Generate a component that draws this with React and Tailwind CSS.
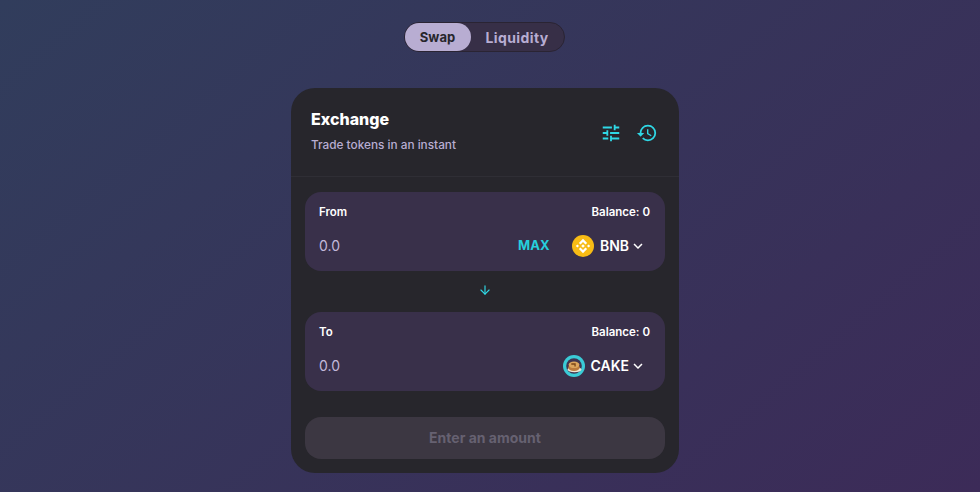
import { MdTune, MdHistory, MdKeyboardArrowDown } from "react-icons/md";
import { LuArrowDown } from "react-icons/lu";

function BnbLogo() {
  return (
    <svg viewBox="0 0 22 22" className="w-[22px] h-[22px]">
      <circle cx="11" cy="11" r="11" fill="#F8BC15" />
      <g fill="#fff">
        <path d="M11 3.8 6.9 7.9l1.6 1.6L11 7l2.5 2.5 1.6-1.6z" />
        <path d="M11 18.2l4.1-4.1-1.6-1.6L11 15l-2.5-2.5-1.6 1.6z" />
        <path d="M3.8 11l1.6-1.6L7 11l-1.6 1.6z" />
        <path d="M15 11l1.6-1.6 1.6 1.6-1.6 1.6z" />
        <path d="M11 9.2 12.8 11 11 12.8 9.2 11z" />
      </g>
    </svg>
  );
}

function CakeLogo() {
  return (
    <svg viewBox="0 0 22 22" className="w-[22px] h-[22px]">
      <circle cx="11" cy="11" r="11" fill="#3ACBD6" />
      <circle cx="11" cy="11" r="7.8" fill="#3F3550" />
      <ellipse cx="11.5" cy="14.6" rx="7" ry="2.6" fill="#EDE6D6" />
      <ellipse cx="11" cy="12.6" rx="5.8" ry="3.4" fill="#B97A3C" />
      <ellipse cx="11" cy="9.8" rx="5.4" ry="3.3" fill="#DBA55C" />
      <path d="M8.3 8.2h4.4v3.2h-1.3V9.8H8.3z" fill="#7A4416" />
    </svg>
  );
}

function TokenPanel({ label, logo, symbol, showMax }) {
  return (
    <div className="h-[79px] rounded-2xl bg-[#39304a] pl-3.5 pr-[15px] pt-3 shrink-0">
      <div className="flex items-center justify-between text-[11.5px] leading-4 font-semibold text-white">
        <span>{label}</span>
        <span>Balance: 0</span>
      </div>
      <div className="flex items-center mt-[13px] h-[26px]">
        <span className="flex-1 text-sm text-[#c2b8da]">0.0</span>
        {showMax && (
          <span className="text-[13px] font-bold text-[#26cfdc] tracking-[0.2px] mr-[22px]">MAX</span>
        )}
        {logo}
        <span className="ml-1.5 text-sm font-semibold text-white">{symbol}</span>
        <MdKeyboardArrowDown className="w-[18px] h-[18px] mr-[3px] text-white" />
      </div>
    </div>
  );
}

export default function App() {
  return (
    <div
      className="w-[980px] h-[492px] overflow-hidden pr-[10px] flex flex-col items-center bg-[linear-gradient(139.73deg,#313d5c_0%,#3c2b58_100%)]"
      style={{ fontFamily: '"Inter", "Noto Sans", sans-serif' }}
    >
      <div className="mt-[22px] -ml-0.5 flex w-[161px] h-[30px] rounded-2xl bg-[#372f47] border border-[#2a2433]">
        <div className="w-[66px] rounded-2xl bg-[#b8add2] flex items-center justify-center text-[13px] font-bold text-[#27262c] pt-px">
          Swap
        </div>
        <div className="flex-1 flex items-center justify-center text-sm tracking-[0.4px] font-bold text-[#b8add2] pt-px">
          Liquidity
        </div>
      </div>

      <div className="mt-[36px] w-[388px] h-[385px] rounded-3xl bg-[#27262c] flex flex-col shrink-0">
        <div className="h-[89px] border-b border-[#2f2e35] pl-5 pr-[21px] flex items-center justify-between shrink-0">
          <div className="pb-[3px]">
            <div className="text-base font-extrabold text-white leading-6">Exchange</div>
            <div className="mt-1.5 text-[11.8px] font-medium text-[#b8add2]">Trade tokens in an instant</div>
          </div>
          <div className="flex items-center gap-3.5 text-[#2fd8e6] pt-0.5">
            <MdTune className="w-[22px] h-[22px]" />
            <MdHistory className="w-[22px] h-[22px]" />
          </div>
        </div>

        <div className="px-3.5 pt-[15px] flex flex-col">
          <TokenPanel label="From" logo={<BnbLogo />} symbol="BNB" showMax />
          <div className="h-[41px] pb-[3px] flex items-center justify-center">
            <LuArrowDown className="w-3.5 h-3.5 text-[#2fd8e6]" />
          </div>
          <TokenPanel label="To" logo={<CakeLogo />} symbol="CAKE" />
          <div className="mt-[26px] h-[42px] rounded-2xl bg-[#3c3742] flex items-center justify-center text-sm font-bold text-[#666171]">
            Enter an amount
          </div>
        </div>
      </div>
    </div>
  );
}
